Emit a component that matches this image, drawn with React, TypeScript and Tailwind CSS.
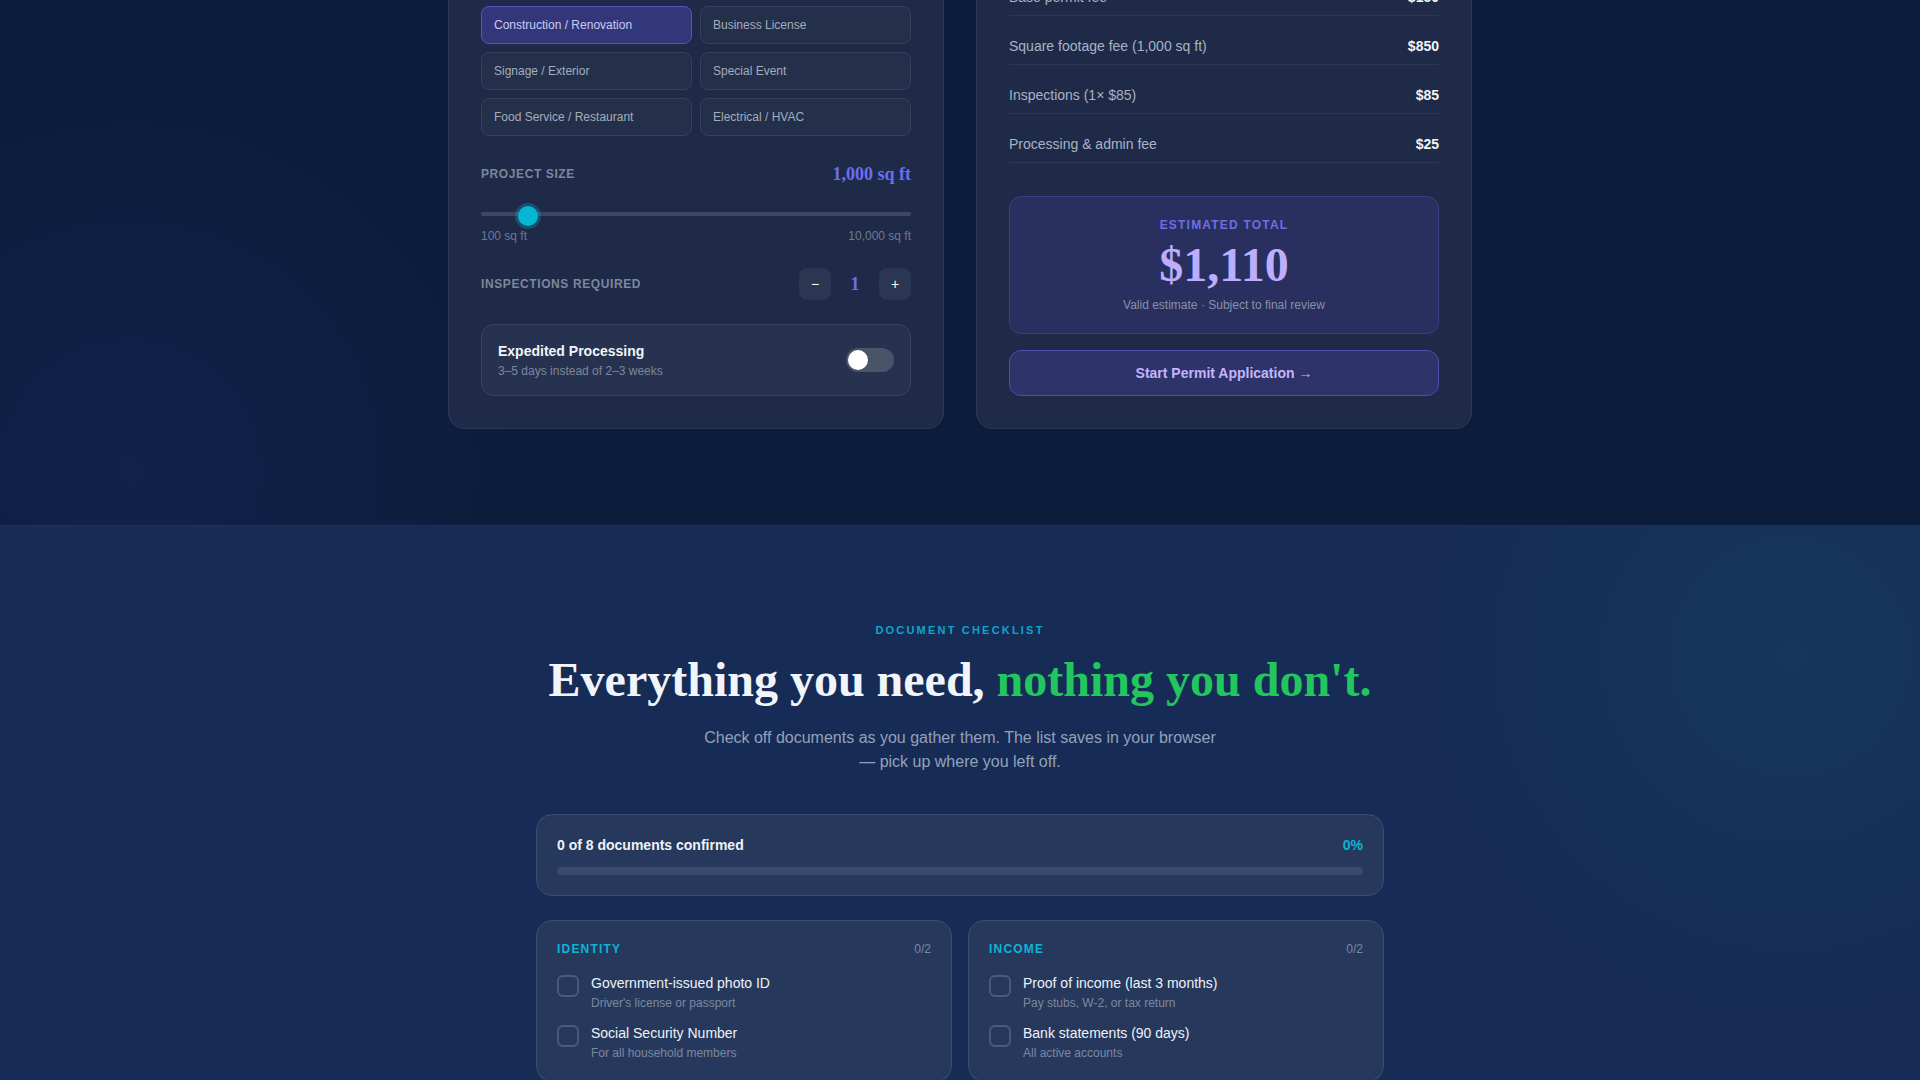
import React from "react";

const types = [
  "Construction / Renovation",
  "Business License",
  "Signage / Exterior",
  "Special Event",
  "Food Service / Restaurant",
  "Electrical / HVAC",
];

const fees = [
  ["Base permit fee", "$150"],
  ["Square footage fee (1,000 sq ft)", "$850"],
  ["Inspections (1× $85)", "$85"],
  ["Processing & admin fee", "$25"],
];

const categories = [
  {
    name: "Identity",
    items: [
      ["Government-issued photo ID", "Driver's license or passport"],
      ["Social Security Number", "For all household members"],
    ],
  },
  {
    name: "Income",
    items: [
      ["Proof of income (last 3 months)", "Pay stubs, W-2, or tax return"],
      ["Bank statements (90 days)", "All active accounts"],
    ],
  },
  {
    name: "Residence",
    items: [
      ["Proof of address", "Utility bill or lease agreement"],
      ["Landlord contact", "Name and phone number"],
    ],
  },
  {
    name: "Property",
    items: [
      ["Site plan", "Drawn to scale"],
      ["Contractor license", "If using a contractor"],
    ],
  },
];

function LeftCard() {
  return (
    <div className="rounded-2xl border border-[#2a3756] bg-[#1e2a47] p-8">
      <h3 className="font-['Liberation_Serif',serif] text-2xl font-bold text-white">Project details</h3>
      <div className="mt-6 mb-3 text-xs font-bold uppercase tracking-wider text-[#7c879c]">Permit type</div>
      <div className="grid grid-cols-2 gap-2">
        {types.map((t, i) => (
          <button
            key={t}
            className={
              i === 0
                ? "rounded-lg border border-[#5256c4] bg-[#33377a] px-3 py-2.5 text-left text-xs leading-4 text-[#c9cbf7]"
                : "rounded-lg border border-[#34405e] bg-[#243049] px-3 py-2.5 text-left text-xs leading-4 text-[#a3adbf]"
            }
          >
            {t}
          </button>
        ))}
      </div>

      <div className="mt-6 flex items-center justify-between">
        <span className="text-xs font-bold uppercase tracking-wider text-[#7c879c]">Project size</span>
        <span className="font-['Liberation_Serif',serif] text-lg leading-7 font-bold text-[#6b6ef2]">1,000 sq ft</span>
      </div>
      <div className="relative mt-4 flex h-5 items-center">
        <div className="h-1 w-full rounded-full bg-[#3b4763]" />
        <div className="absolute left-[37px] top-0.5 h-5 w-5 rounded-full bg-[#06b6d4] shadow-[0_0_0_3px_rgba(6,182,212,0.28)]" />
      </div>
      <div className="mt-1 flex justify-between text-xs leading-4 text-[#6f7a90]">
        <span>100 sq ft</span>
        <span>10,000 sq ft</span>
      </div>

      <div className="mt-6 flex items-center justify-between">
        <span className="text-xs font-bold uppercase tracking-wider text-[#7c879c]">Inspections required</span>
        <div className="flex items-center gap-2">
          <button className="flex h-8 w-8 items-center justify-center rounded-lg bg-[#2a3652] text-sm text-white">−</button>
          <span className="w-8 text-center font-['Liberation_Serif',serif] text-lg font-bold text-[#6b6ef2]">1</span>
          <button className="flex h-8 w-8 items-center justify-center rounded-lg bg-[#2a3652] text-sm text-white">+</button>
        </div>
      </div>

      <div className="mt-6 flex items-center justify-between rounded-xl border border-[#36425f] bg-[#263250] p-4">
        <div>
          <div className="text-sm font-bold text-[#f1f5f9]">Expedited Processing</div>
          <div className="mt-0.5 text-xs leading-4 text-[#7d879b]">3–5 days instead of 2–3 weeks</div>
        </div>
        <div className="flex h-6 w-12 items-center rounded-full bg-[#4a5469] px-0.5">
          <div className="h-5 w-5 rounded-full bg-white" />
        </div>
      </div>
    </div>
  );
}

function RightCard() {
  return (
    <div className="rounded-2xl border border-[#2a3756] bg-[#1e2a47] p-8">
      <h3 className="mb-4 font-['Liberation_Serif',serif] text-2xl font-bold text-white">Fee breakdown</h3>
      <div className="space-y-3">
        {fees.map(([l, v]) => (
          <div key={l} className="flex items-center justify-between border-b border-[#2b3753] py-2 text-sm">
            <span className="text-[#a9b3c5]">{l}</span>
            <span className="font-bold text-[#f1f5f9]">{v}</span>
          </div>
        ))}
      </div>
      <div className="mt-[33px] rounded-xl border border-[#393f84] bg-[#29305f] py-5 text-center">
        <div className="text-xs leading-4 font-bold uppercase tracking-[0.1em] text-[#6c6fe2]">Estimated total</div>
        <div className="mt-2 font-['Liberation_Serif',serif] text-5xl leading-none font-bold text-[#bcaefc]">$1,110</div>
        <div className="mt-2 text-xs leading-4 text-[#8891a7]">Valid estimate · Subject to final review</div>
      </div>
      <button className="mt-4 w-full rounded-xl border border-[#4b4fae] bg-[#2e3369] py-3 text-sm font-bold text-[#c4b5fd]">
        Start Permit Application →
      </button>
    </div>
  );
}

function Checklist() {
  return (
    <div className="mx-auto w-[848px]">
      <div className="rounded-2xl border border-[#3a4c70] bg-[#26395d] p-5">
        <div className="flex items-center justify-between text-sm font-bold">
          <span className="text-[#eef2f8]">0 of 8 documents confirmed</span>
          <span className="text-[#06b6d4]">0%</span>
        </div>
        <div className="mt-3 h-2 w-full rounded-full bg-[#3a4a6b]" />
      </div>
      <div className="mt-6 grid grid-cols-2 gap-4">
        {categories.map((c) => (
          <div key={c.name} className="rounded-2xl border border-[#3a4c70] bg-[#26395d] p-5">
            <div className="mb-4 flex items-center justify-between">
              <span className="text-xs leading-4 font-bold uppercase tracking-widest text-[#0fb3d3]">{c.name}</span>
              <span className="text-xs leading-4 text-[#7d889e]">0/2</span>
            </div>
            <div className="space-y-3">
              {c.items.map(([t, s]) => (
                <div key={t} className="flex items-start gap-3">
                  <div className="mt-0.5 h-[22px] w-[22px] shrink-0 rounded-md border-2 border-[#485a7c]" />
                  <div>
                    <div className="text-sm text-[#eef2f8]">{t}</div>
                    <div className="mt-0.5 text-xs leading-4 text-[#7d889e]">{s}</div>
                  </div>
                </div>
              ))}
            </div>
          </div>
        ))}
      </div>
    </div>
  );
}

export default function App() {
  return (
    <div className="w-full font-['Liberation_Sans',Arial,sans-serif]">
      <section className="flex h-[525px] flex-col justify-end overflow-hidden bg-[#0c1d3b] bg-[radial-gradient(circle_at_130px_470px,rgba(79,70,229,0.09),transparent_380px)] pb-24">
        <div className="mx-auto grid w-[1024px] grid-cols-2 items-end gap-8">
          <LeftCard />
          <RightCard />
        </div>
      </section>
      <section className="border-t border-[#1b325d] bg-[#162c56] bg-[radial-gradient(circle_at_1790px_130px,rgba(20,184,166,0.07),transparent_380px)] pt-24 pb-24">
        <div className="text-center text-[11px] leading-4 font-bold uppercase tracking-[0.2em] text-[#0ea5c9]">Document checklist</div>
        <h2 className="mt-3 text-center font-['Liberation_Serif',serif] text-5xl leading-tight font-bold text-[#f1f5fb]">
          Everything you need, <span className="text-[#22c55e]">nothing you don't.</span>
        </h2>
        <p className="mx-auto mt-4 max-w-[520px] text-center text-base leading-6 text-[#94a1ba]">
          Check off documents as you gather them. The list saves in your browser — pick up where you left off.
        </p>
        <div className="mt-10">
          <Checklist />
        </div>
      </section>
    </div>
  );
}
